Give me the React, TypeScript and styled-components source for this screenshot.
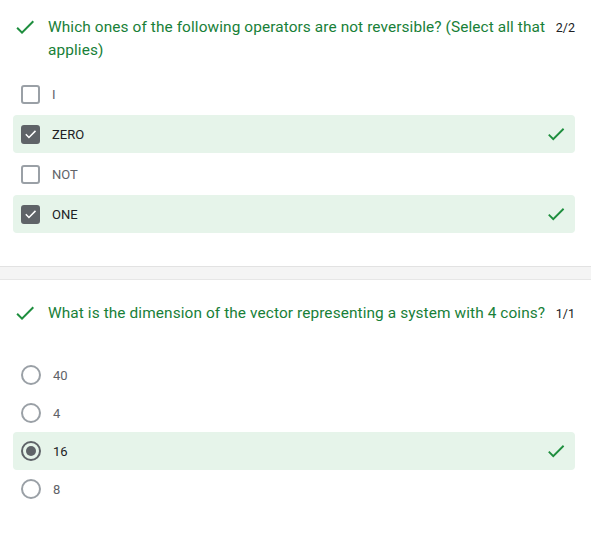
import React from "react";
import styled, { createGlobalStyle } from "styled-components";

const Global = createGlobalStyle`
  html, body { margin: 0; padding: 0; background: #fff; }
  body { font-family: Roboto, "Noto Sans", Arial, sans-serif; -webkit-font-smoothing: antialiased; }
`;

const Page = styled.div`
  width: 591px;
  display: flex;
  flex-direction: column;
`;

const Section = styled.section<{ $top: number; $bottom: number }>`
  padding: ${(p) => p.$top}px 16px ${(p) => p.$bottom}px 13px;
  display: flex;
  flex-direction: column;
`;

const Header = styled.div<{ $after: number }>`
  display: flex;
  align-items: baseline;
  margin-bottom: ${(p) => p.$after}px;
`;

const HeaderIcon = styled.div`
  align-self: flex-start;
  width: 24px;
  height: 24px;
  margin-top: -1px;
  margin-right: 11px;
  flex: none;
  color: #1e8e3e;
  display: flex;
`;

const QuestionText = styled.div`
  flex: 1;
  font-size: 15.4px;
  line-height: 23px;
  color: #188038;
  letter-spacing: 0.1px;
`;

const Score = styled.div`
  flex: none;
  font-size: 12.5px;
  color: #202124;
  margin-left: 3px;
  width: 21px;
  text-align: right;
`;

const List = styled.div<{ $gap: number }>`
  display: flex;
  flex-direction: column;
  gap: ${(p) => p.$gap}px;
`;

const Row = styled.div<{ $correct?: boolean }>`
  height: 38px;
  display: flex;
  align-items: center;
  padding: 0 8px;
  border-radius: 4px;
  background: ${(p) => (p.$correct ? "#e6f4ea" : "transparent")};
`;

const Box = styled.div<{ $checked?: boolean }>`
  width: 19px;
  height: 19px;
  box-sizing: border-box;
  border-radius: 3px;
  border: 2px solid ${(p) => (p.$checked ? "#5f6368" : "#9aa0a6")};
  background: ${(p) => (p.$checked ? "#5f6368" : "#fff")};
  display: flex;
  align-items: center;
  justify-content: center;
  flex: none;
  color: #fff;
`;

const Radio = styled.div<{ $checked?: boolean }>`
  width: 20px;
  height: 20px;
  box-sizing: border-box;
  border-radius: 50%;
  border: 2px solid ${(p) => (p.$checked ? "#5f6368" : "#9aa0a6")};
  display: flex;
  align-items: center;
  justify-content: center;
  flex: none;
  &::after {
    content: "";
    display: ${(p) => (p.$checked ? "block" : "none")};
    width: 10px;
    height: 10px;
    border-radius: 50%;
    background: #5f6368;
  }
`;

const Label = styled.span<{ $selected?: boolean }>`
  flex: 1;
  margin-left: 12px;
  font-size: 13px;
  color: ${(p) => (p.$selected ? "#202124" : "#5f6368")};
`;

const RowCheck = styled.div`
  width: 22px;
  height: 22px;
  color: #1e8e3e;
  display: flex;
`;

const Divider = styled.div`
  height: 12px;
  background: #f4f4f4;
  border-top: 1px solid #e2e2e2;
  border-bottom: 1px solid #e6e6e6;
`;

const Done = ({ size }: { size: number }) => (
  <svg width={size} height={size} viewBox="0 0 24 24" fill="currentColor">
    <path d="M9 16.17L4.83 12l-1.42 1.41L9 19 21 7l-1.41-1.41z" />
  </svg>
);

const SmallCheck = () => (
  <svg width="16" height="16" viewBox="0 0 24 24" fill="none" stroke="currentColor" strokeWidth="2.4">
    <path d="M4.5 12.5l5 5L20 7" />
  </svg>
);

type Opt = { label: string; selected: boolean; correct?: boolean };

const q1: Opt[] = [
  { label: "I", selected: false },
  { label: "ZERO", selected: true, correct: true },
  { label: "NOT", selected: false },
  { label: "ONE", selected: true, correct: true },
];

const q2: Opt[] = [
  { label: "40", selected: false },
  { label: "4", selected: false },
  { label: "16", selected: true, correct: true },
  { label: "8", selected: false },
];

export default function App() {
  return (
    <Page>
      <Global />
      <Section $top={16} $bottom={33}>
        <Header $after={13}>
          <HeaderIcon>
            <Done size={24} />
          </HeaderIcon>
          <QuestionText>
            Which ones of the following operators are not reversible? (Select all that applies)
          </QuestionText>
          <Score>2/2</Score>
        </Header>
        <List $gap={2}>
          {q1.map((o) => (
            <Row key={o.label} $correct={o.selected && o.correct}>
              <Box $checked={o.selected}>{o.selected && <SmallCheck />}</Box>
              <Label $selected={o.selected}>{o.label}</Label>
              {o.selected && o.correct && (
                <RowCheck>
                  <Done size={22} />
                </RowCheck>
              )}
            </Row>
          ))}
        </List>
      </Section>
      <Divider />
      <Section $top={22} $bottom={30}>
        <Header $after={31}>
          <HeaderIcon>
            <Done size={24} />
          </HeaderIcon>
          <QuestionText>
            What is the dimension of the vector representing a system with 4 coins?
          </QuestionText>
          <Score>1/1</Score>
        </Header>
        <List $gap={0}>
          {q2.map((o) => (
            <Row key={o.label} $correct={o.selected && o.correct}>
              <Radio $checked={o.selected} />
              <Label $selected={o.selected}>{o.label}</Label>
              {o.selected && o.correct && (
                <RowCheck>
                  <Done size={22} />
                </RowCheck>
              )}
            </Row>
          ))}
        </List>
      </Section>
    </Page>
  );
}
